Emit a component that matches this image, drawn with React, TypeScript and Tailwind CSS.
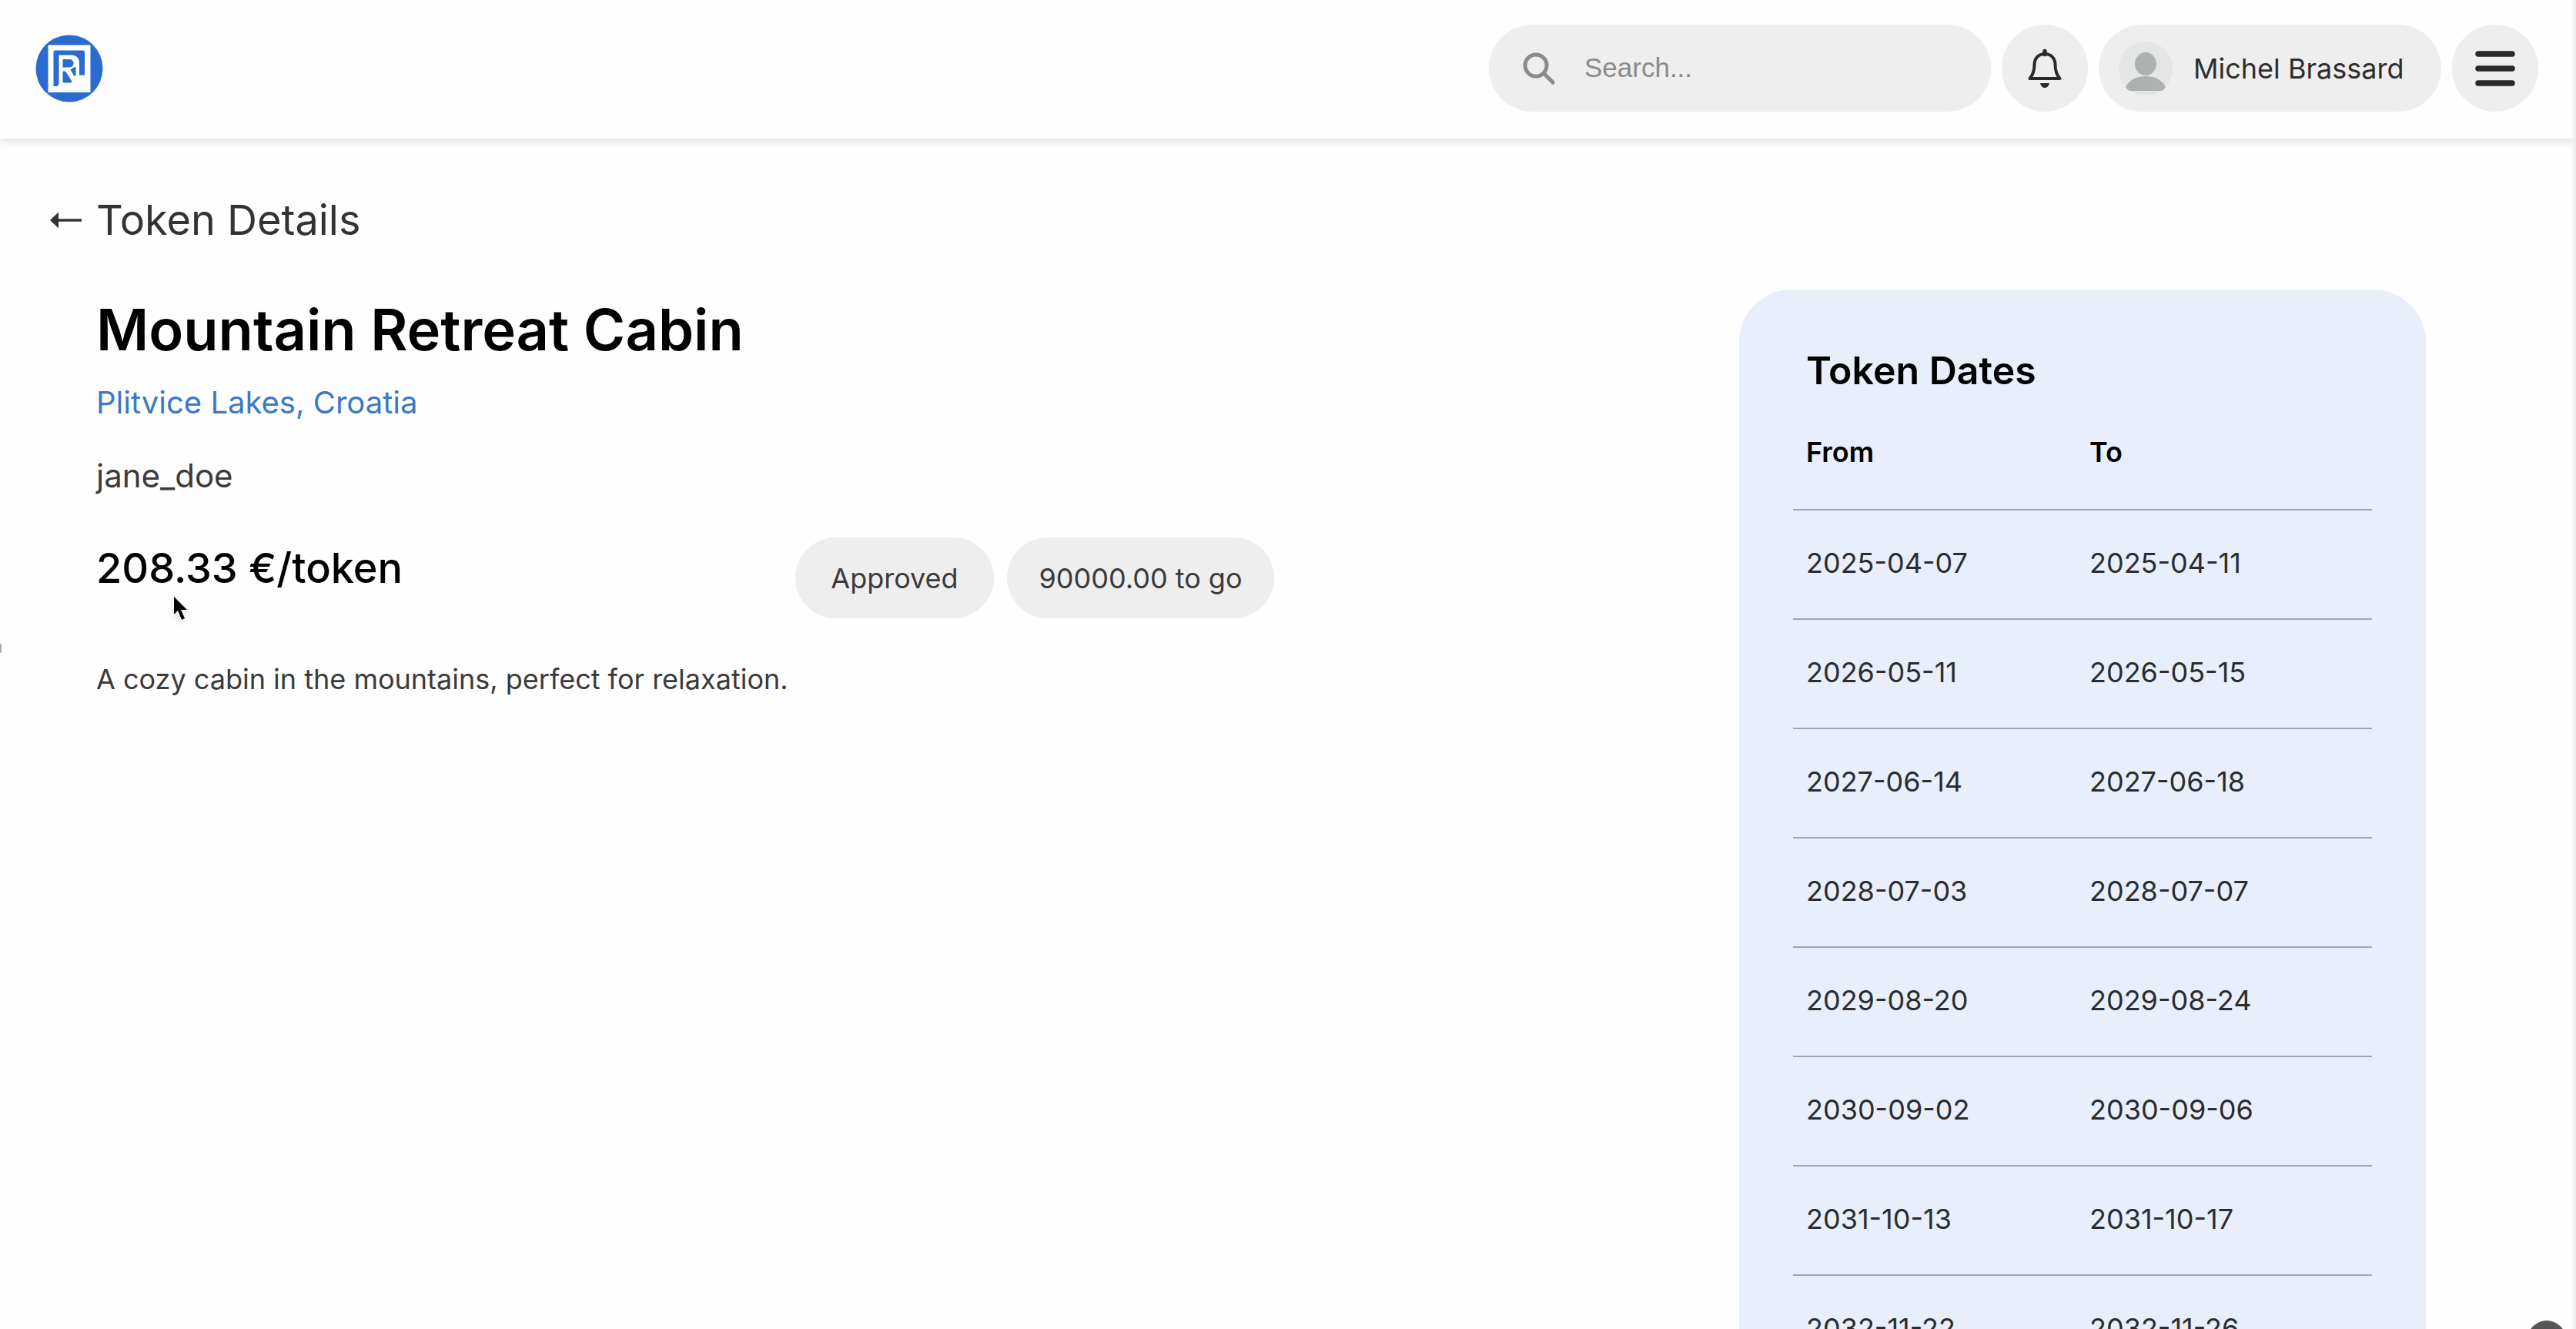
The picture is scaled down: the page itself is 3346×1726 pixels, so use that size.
import React from "react";

const dates: [string, string][] = [
  ["2025-04-07", "2025-04-11"],
  ["2026-05-11", "2026-05-15"],
  ["2027-06-14", "2027-06-18"],
  ["2028-07-03", "2028-07-07"],
  ["2029-08-20", "2029-08-24"],
  ["2030-09-02", "2030-09-06"],
  ["2031-10-13", "2031-10-17"],
  ["2032-11-22", "2032-11-26"],
];

function Logo() {
  return (
    <svg viewBox="0 0 88 88" className="size-[88px]" aria-hidden="true">
      <circle cx="44" cy="44" r="43.5" fill="#2b6bd0" />
      <rect x="16.5" y="13.500" width="55" height="61.500" fill="#fff" />
      <path d="M25 20.500h37.500l1.500 1.500v30.500h-7V37c0-7-4-10.500-11-10.500H30.500v38l-2.500 2.500h-4.500V22z" fill="#2b6bd0" />
      <path d="M35.500 32h8c4 0 6 2 6 5.200 0 3-2 5.200-5 5.200h-9z" fill="#2b6bd0" />
      <path d="M35.500 47.500h3.500l8.500 13-1.500 2h-9.500l-1-1z" fill="#2b6bd0" />
      <path d="M45.500 45.500l6-4 1 1.500v10.500h-2.500z" fill="#2b6bd0" />
    </svg>
  );
}

function SearchIcon() {
  return (
    <svg viewBox="0 0 42 42" className="size-[42px] shrink-0" fill="none" stroke="#8a8a8a" strokeLinecap="round" aria-hidden="true">
      <circle cx="17" cy="17" r="14" strokeWidth="5" />
      <path d="M28 28l11 11" strokeWidth="5" />
    </svg>
  );
}

function BellIcon() {
  return (
    <svg viewBox="0 0 44 52" className="h-[52px] w-[44px]" fill="none" aria-hidden="true">
      <path
        d="M22 7c-8 0-13.500 6-13.500 13.500 0 9-2 14-6 18.500h39c-4-4.500-6-9.500-6-18.500C35.500 13 30 7 22 7z"
        stroke="#2b2929"
        strokeWidth="4"
        strokeLinejoin="round"
      />
      <path d="M22 3.500v4" stroke="#2b2929" strokeWidth="5.500" strokeLinecap="round" />
      <path d="M16 45h12c-1 4-3 6-6 6s-5-2-6-6z" fill="#2b2929" />
    </svg>
  );
}

function Avatar() {
  return (
    <svg viewBox="0 0 72 72" className="size-[72px] shrink-0" aria-hidden="true">
      <circle cx="36" cy="36" r="35" fill="#e4e5e5" />
      <ellipse cx="36" cy="30" rx="14" ry="15" fill="#abb2b0" />
      <path d="M10 60c5-9 14-14 26-14s21 5 26 14c-1 2-3 4-5 5H15c-2-1-4-3-5-5z" fill="#abb2b0" />
    </svg>
  );
}

function MenuIcon() {
  return (
    <svg viewBox="0 0 52 46" className="h-[46px] w-[52px]" stroke="#2b2929" strokeWidth="7.500" strokeLinecap="round" aria-hidden="true">
      <path d="M4 4h44M4 23h44M4 42h44" />
    </svg>
  );
}

function ArrowIcon() {
  return (
    <svg viewBox="0 0 42 22" className="h-[22px] w-[42px]" aria-hidden="true">
      <path d="M8 11h33" stroke="#353232" strokeWidth="3.500" />
      <path d="M0 11L11 0.500v21z" fill="#353232" />
    </svg>
  );
}

function Cursor() {
  return (
    <svg viewBox="0 0 26 40" className="pointer-events-none absolute top-[772px] left-[222px] h-[40px] w-[26px] drop-shadow-md" aria-hidden="true">
      <path d="M4 3v23l5-5 5 12 4-2-5-11h8z" fill="#000" stroke="#fff" strokeWidth="2.500" paintOrder="stroke" />
    </svg>
  );
}

function Header() {
  return (
    <header className="flex h-[180px] items-center justify-between bg-[#fefefe] pt-[32px] pr-[49px] pb-[35px] pl-[46px] shadow-[0_4px_10px_rgba(0,0,0,0.12)]">
      <a href="#home" aria-label="Home">
        <Logo />
      </a>
      <div className="flex items-center gap-[14px]">
        <label className="flex h-[113px] w-[652px] items-center gap-[38px] rounded-full bg-[#eeeeee] px-[44px]">
          <SearchIcon />
          <input
            type="text"
            aria-label="Search"
            placeholder="Search..."
            className="min-w-0 flex-1 bg-transparent font-['Liberation_Sans',sans-serif] text-[35px] outline-none placeholder:text-[#8a8a8a]"
          />
        </label>
        <button aria-label="Notifications" className="flex h-[113px] w-[112px] items-center justify-center rounded-full bg-[#eeeeee]">
          <BellIcon />
        </button>
        <button className="flex h-[113px] w-[445px] items-center gap-[26px] rounded-full bg-[#eeeeee] px-[25px] text-[36px] whitespace-nowrap text-[#2f2d2d]">
          <Avatar />
          Michel Brassard
        </button>
        <button aria-label="Menu" className="flex h-[113px] w-[112px] items-center justify-center rounded-full bg-[#eeeeee]">
          <MenuIcon />
        </button>
      </div>
    </header>
  );
}

function TokenInfo() {
  return (
    <section className="w-[1530px] pt-[8px]">
      <h1 className="text-[74px] leading-[88px] font-semibold text-black">Mountain Retreat Cabin</h1>
      <p className="mt-[21px] text-[40px] leading-[60px] text-[#3b78c9]">Plitvice Lakes, Croatia</p>
      <p className="mt-[35px] text-[42px] leading-[60px] text-[#3c3a3a]">jane_doe</p>
      <div className="mt-[50px] flex items-start justify-between">
        <p className="text-[54px] leading-[80px] font-medium text-black">208.33 €/token</p>
        <div className="flex gap-[17px] text-[36px] whitespace-nowrap text-[#3c3a3a]">
          <span className="flex h-[105px] w-[258px] items-center justify-center rounded-full bg-[#eeeeee]">Approved</span>
          <span className="flex h-[105px] w-[347px] items-center justify-center rounded-full bg-[#eeeeee]">90000.00 to go</span>
        </div>
      </div>
      <p className="mt-[52px] text-[36px] leading-[54px] text-[#3c3a3a]">
        A cozy cabin in the mountains, perfect for relaxation.
      </p>
    </section>
  );
}

function TokenDates() {
  return (
    <aside className="w-[892px] rounded-t-[68px] bg-[#e9effa] px-[70px] pt-[69px]">
      <h2 className="pl-[17px] text-[50px] leading-[72px] font-semibold text-black">Token Dates</h2>
      <table className="w-full table-fixed border-collapse text-left">
        <thead>
          <tr className="h-[145px] border-b-2 border-[#a3a6b0] text-[36px] text-black">
            <th scope="col" className="w-[368px] px-[17px] pt-[43px] align-top leading-[54px] font-semibold">From</th>
            <th scope="col" className="px-[17px] pt-[43px] align-top leading-[54px] font-semibold">To</th>
          </tr>
        </thead>
        <tbody>
          {dates.map(([from, to]) => (
            <tr key={from} className="h-[142px] border-b-2 border-[#a3a6b0] text-[36px] leading-[54px] text-[#2b2c30]">
              <td className="px-[17px] pb-[4px]">{from}</td>
              <td className="px-[17px] pb-[4px]">{to}</td>
            </tr>
          ))}
        </tbody>
      </table>
    </aside>
  );
}

export default function App() {
  return (
    <div className="relative h-screen overflow-hidden bg-[#fefefe] font-[Inter,sans-serif]">
      <Header />
      <main className="pr-[195px] pl-[65px]">
        <a href="#tokens" className="flex items-center gap-[18px] pt-[67px] text-[54px] leading-[78px] text-[#353232]">
          <ArrowIcon />
          Token Details
        </a>
        <div className="mt-[51px] flex items-start justify-between pl-[60px]">
          <TokenInfo />
          <TokenDates />
        </div>
      </main>
      <Cursor />
      <div className="absolute top-[836px] left-0 h-[12px] w-[2px] rounded-r-full bg-[#a8a8a8]" />
      <button aria-label="Help" className="absolute right-[13px] bottom-[-39px] size-[50px] rounded-full bg-[#555557]" />
      <div className="pointer-events-none absolute inset-y-0 right-0 w-[8px] bg-linear-to-r from-transparent to-[#ececec]" />
    </div>
  );
}
